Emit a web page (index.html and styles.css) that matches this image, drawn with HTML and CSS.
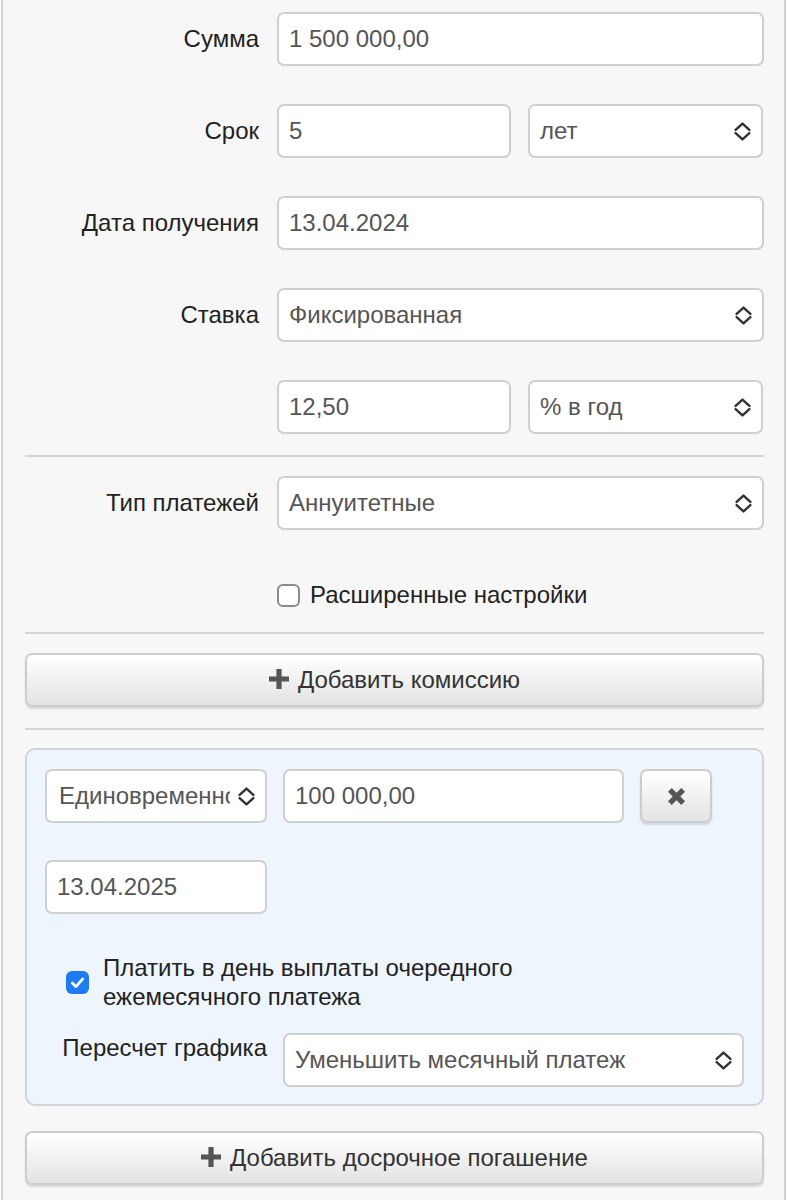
FILE: index.html
```html
<!DOCTYPE html>
<html lang="ru">
<head>
<meta charset="utf-8">
<title>Кредитный калькулятор</title>
<link rel="stylesheet" href="styles.css">
</head>
<body>
<div class="page">
  <div class="form">
    <div class="row">
      <div class="label">Сумма</div>
      <div class="field">1 500 000,00</div>
    </div>
    <div class="row">
      <div class="label">Срок</div>
      <div class="pair">
        <div class="field">5</div>
        <div class="field select">лет
          <svg class="chev" viewBox="0 0 16 18"><polyline points="1.5,7.5 8,1.5 14.5,7.5"/><polyline points="1.5,10.5 8,16.5 14.5,10.5"/></svg>
        </div>
      </div>
    </div>
    <div class="row">
      <div class="label">Дата получения</div>
      <div class="field">13.04.2024</div>
    </div>
    <div class="row">
      <div class="label">Ставка</div>
      <div class="field select">Фиксированная
        <svg class="chev" viewBox="0 0 16 18"><polyline points="1.5,7.5 8,1.5 14.5,7.5"/><polyline points="1.5,10.5 8,16.5 14.5,10.5"/></svg>
      </div>
    </div>
    <div class="row last">
      <div class="label"></div>
      <div class="pair">
        <div class="field">12,50</div>
        <div class="field select">% в год
          <svg class="chev" viewBox="0 0 16 18"><polyline points="1.5,7.5 8,1.5 14.5,7.5"/><polyline points="1.5,10.5 8,16.5 14.5,10.5"/></svg>
        </div>
      </div>
    </div>
    <hr class="sep sep1">
    <div class="row last">
      <div class="label">Тип платежей</div>
      <div class="field select">Аннуитетные
        <svg class="chev" viewBox="0 0 16 18"><polyline points="1.5,7.5 8,1.5 14.5,7.5"/><polyline points="1.5,10.5 8,16.5 14.5,10.5"/></svg>
      </div>
    </div>
    <div class="row check-row">
      <div></div>
      <div class="check"><span class="box"></span><span>Расширенные настройки</span></div>
    </div>
    <hr class="sep sep2">
    <div class="btn wide">
      <svg class="plus" viewBox="0 0 20 20"><path d="M7.4 0h5.2v7.4H20v5.2h-7.4V20H7.4v-7.4H0V7.4h7.4z"/></svg>Добавить комиссию
    </div>
    <hr class="sep sep3">
    <div class="panel">
      <div class="prow">
        <div class="field select small"><span class="clip">Единовременно</span>
          <svg class="chev" viewBox="0 0 16 18"><polyline points="1.5,7.5 8,1.5 14.5,7.5"/><polyline points="1.5,10.5 8,16.5 14.5,10.5"/></svg>
        </div>
        <div class="field">100 000,00</div>
        <div class="btn xbtn">
          <svg class="x" viewBox="0 0 20 20"><path d="M1 5L5 1 10 6 15 1 19 5 14 10 19 15 15 19 10 14 5 19 1 15 6 10z"/></svg>
        </div>
      </div>
      <div class="date-row">
        <div class="field">13.04.2025</div>
      </div>
      <div class="pay">
        <span class="box checked"><svg viewBox="0 0 22 22"><polyline points="6,11.5 9.5,15 16,7.5"/></svg></span>
        <span class="pay-text">Платить в день выплаты очередного<br>ежемесячного платежа</span>
      </div>
      <div class="recalc">
        <div class="rlabel">Пересчет графика</div>
        <div class="field select">Уменьшить месячный платеж
          <svg class="chev" viewBox="0 0 16 18"><polyline points="1.5,7.5 8,1.5 14.5,7.5"/><polyline points="1.5,10.5 8,16.5 14.5,10.5"/></svg>
        </div>
      </div>
    </div>
    <div class="btn wide btn2">
      <svg class="plus" viewBox="0 0 20 20"><path d="M7.4 0h5.2v7.4H20v5.2h-7.4V20H7.4v-7.4H0V7.4h7.4z"/></svg>Добавить досрочное погашение
    </div>
  </div>
</div>
</body>
</html>
```

FILE: styles.css
```css
html, body {
  margin: 0;
  padding: 0;
  background: #ffffff;
}
body {
  font-family: "Liberation Sans", Arial, Helvetica, sans-serif;
  font-size: 24px;
  color: #222;
}
.page {
  margin-left: 1px;
  width: 781px;
  min-height: 1200px;
  background: #f7f7f7;
  border-left: 2px solid #d2d2d2;
  border-right: 2px solid #d2d2d2;
}
.form {
  padding: 12px 20px 20px 22px;
}
.row {
  display: grid;
  grid-template-columns: 234px 1fr;
  column-gap: 18px;
  margin-bottom: 38px;
}
.row.last {
  margin-bottom: 0;
}
.label {
  text-align: right;
  line-height: 54px;
  color: #222;
}
.field {
  position: relative;
  height: 54px;
  box-sizing: border-box;
  border: 2px solid #cfcfcf;
  border-radius: 7px;
  background: #fff;
  padding: 0 10px;
  line-height: 50px;
  color: #555;
  white-space: nowrap;
}
.select {
  padding-right: 40px;
}
.chev {
  position: absolute;
  right: 10px;
  top: 50%;
  width: 17px;
  height: 19px;
  margin-top: -9px;
  fill: none;
  stroke: #333;
  stroke-width: 2.3;
  stroke-linecap: round;
  stroke-linejoin: round;
}
.pair {
  display: grid;
  grid-template-columns: 234px 235px;
  column-gap: 17px;
}
.sep {
  border: 0;
  height: 2px;
  background: #d4d4d4;
  margin: 0;
}
.sep1 {
  margin: 21px 0 19px;
}
.check-row {
  margin: 50px 0 0;
  height: 30px;
}
.check {
  display: flex;
  align-items: center;
  gap: 10px;
  height: 30px;
  color: #222;
}
.box {
  display: inline-block;
  box-sizing: border-box;
  width: 23px;
  height: 23px;
  border: 2px solid #8a8a8a;
  border-radius: 6px;
  background: #fff;
  flex: none;
}
.box.checked {
  border: 0;
  background: #1f7bf0;
}
.box.checked svg {
  display: block;
  width: 23px;
  height: 23px;
  fill: none;
  stroke: #fff;
  stroke-width: 2.6;
  stroke-linecap: round;
  stroke-linejoin: round;
}
.sep2 {
  margin: 22px 0 19px;
}
.btn {
  box-sizing: border-box;
  height: 54px;
  border: 2px solid #cdcdcd;
  border-radius: 7px;
  background: linear-gradient(#ffffff, #e3e3e3);
  box-shadow: 0 2px 2px rgba(0, 0, 0, 0.12);
  color: #333;
  display: flex;
  align-items: center;
  justify-content: center;
}
.plus {
  width: 20px;
  height: 20px;
  fill: #555;
  margin-right: 9px;
  margin-top: -2px;
}
.sep3 {
  margin: 21px 0 18px;
}
.panel {
  border: 2px solid #cfd4d9;
  border-radius: 10px;
  background: #eef5fd;
  padding: 19px 18px 17px 18px;
}
.prow {
  display: grid;
  grid-template-columns: 222px 341px 72px;
  column-gap: 16px;
}
.small {
  padding-left: 12px;
  padding-right: 35px;
}
.clip {
  display: block;
  overflow: hidden;
  white-space: nowrap;
}
.xbtn {
  width: 72px;
}
.x {
  width: 19px;
  height: 19px;
  fill: #555;
}
.date-row {
  margin-top: 37px;
  width: 222px;
}
.pay {
  margin-top: 39px;
  padding-left: 21px;
  display: flex;
  align-items: center;
  gap: 14px;
}
.pay-text {
  line-height: 29px;
  color: #222;
}
.recalc {
  margin-top: 22px;
  display: grid;
  grid-template-columns: 222px 1fr;
  column-gap: 16px;
}
.rlabel {
  text-align: right;
  line-height: 30px;
  color: #222;
}
.btn2 {
  margin-top: 25px;
}
```
